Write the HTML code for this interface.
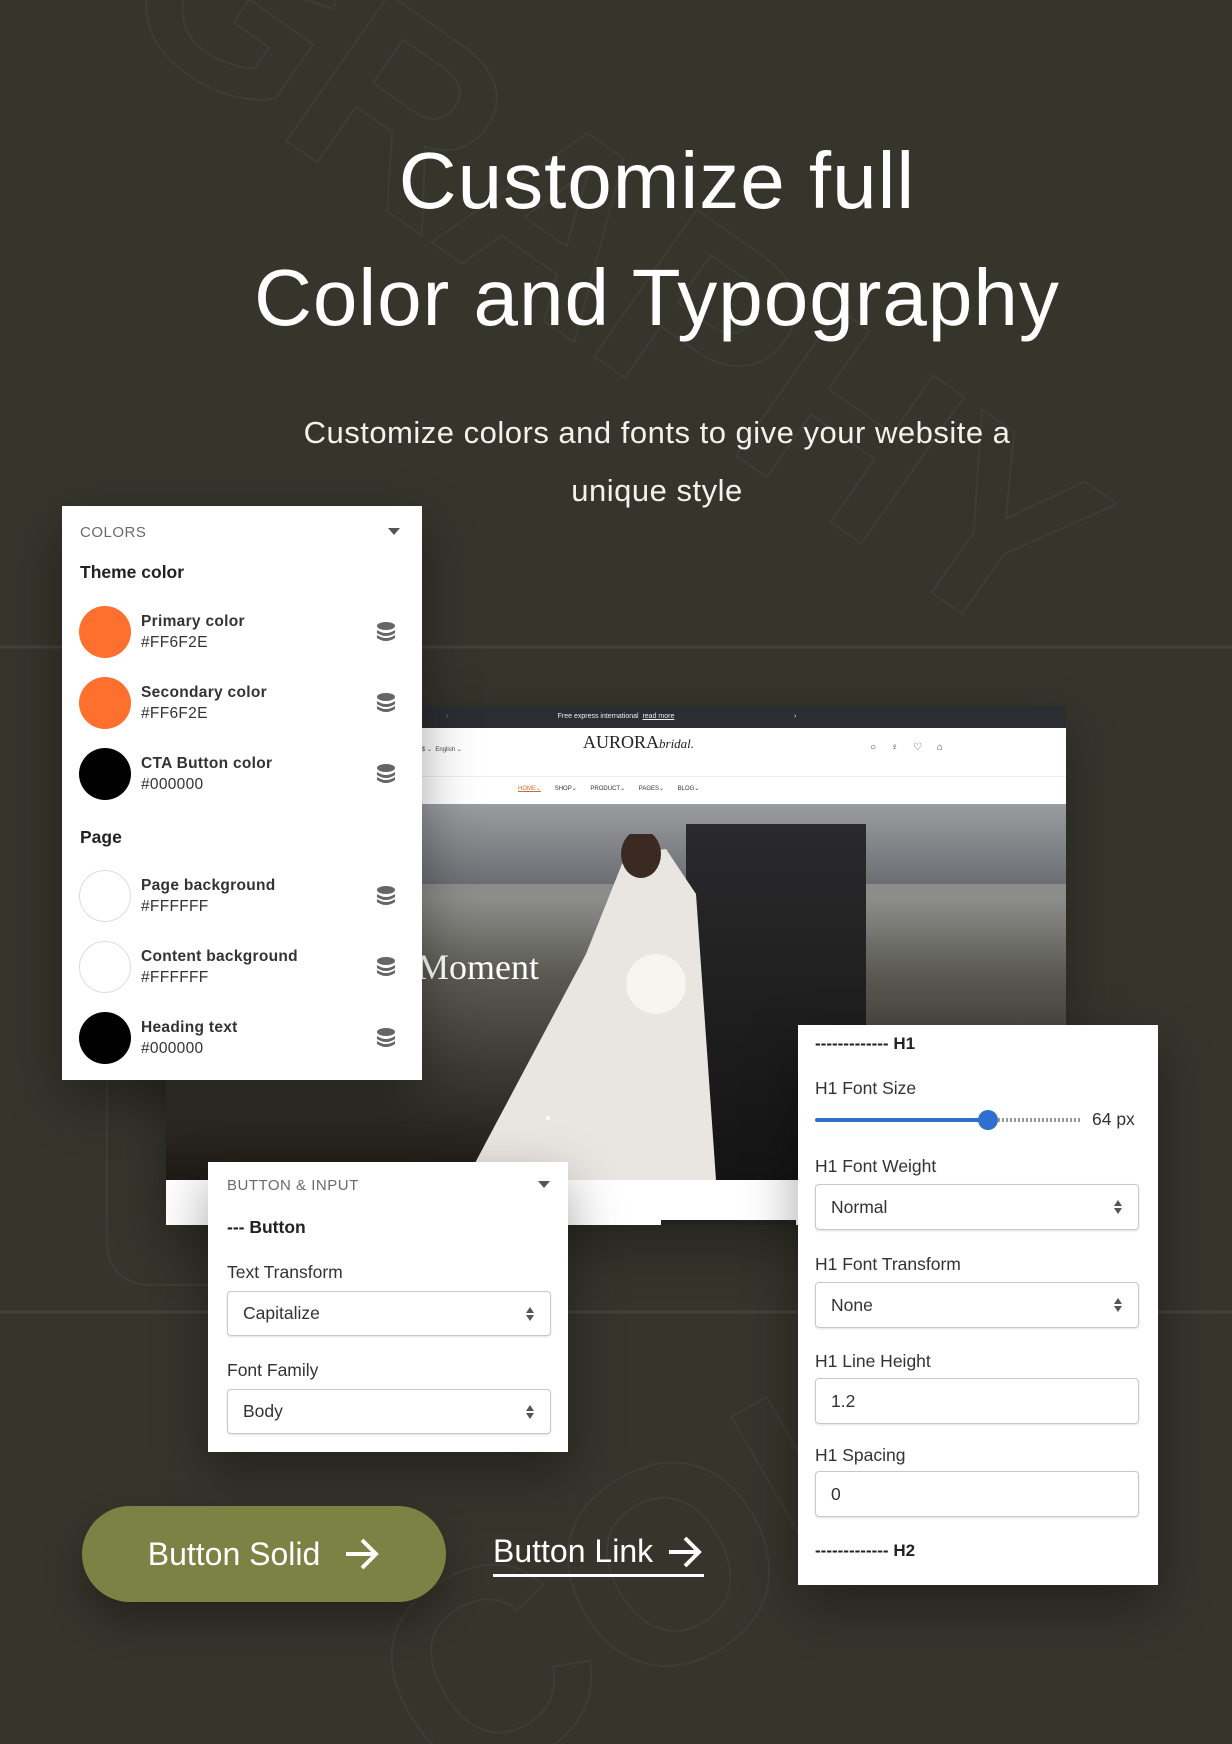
<!DOCTYPE html>
<html><head><meta charset="utf-8">
<style>
*{margin:0;padding:0;box-sizing:border-box}
html,body{width:1232px;height:1744px;overflow:hidden}
body{background:#35352c;position:relative;font-family:"Liberation Sans",sans-serif}
.abs{position:absolute}
.title{left:100px;width:1114px;text-align:center;color:#fff;font-size:80px;letter-spacing:1px}
.sub{left:100px;width:1114px;text-align:center;color:#f2f2ee;font-size:31px;line-height:58px;letter-spacing:.5px}
.panel{background:#fff;box-shadow:0 20px 50px rgba(0,0,0,.35)}
.cap{color:#6b6b6b;font-size:15px;letter-spacing:.5px}
.sec{color:#222;font-size:18px;font-weight:bold}
.row{position:absolute;left:17px;right:17px;height:54px}
.circ{position:absolute;left:0;top:0;width:52px;height:52px;border-radius:50%}
.nm{position:absolute;left:62px;top:7px;font-size:15.5px;font-weight:bold;color:#333;letter-spacing:.3px}
.hx{position:absolute;left:62px;top:28px;font-size:15.5px;color:#333;letter-spacing:.3px}
.db{position:absolute;right:10px;top:16px}
.lbl{font-size:17.5px;color:#333}
.sel{position:absolute;border:1px solid #c9c9c9;border-radius:4px;box-shadow:0 1px 2px rgba(0,0,0,.12);font-size:17.5px;color:#333;padding-left:15px;display:flex;align-items:center;background:#fff}
.sel .ar{position:absolute;right:16px;top:50%;margin-top:-7px;width:8px;height:14px}
</style></head><body>

<svg class="abs" style="left:0;top:0" width="1232" height="1744">
 <g fill="none" stroke="rgba(255,255,255,0.045)" stroke-width="2">
  <text x="-40" y="120" font-family="Liberation Sans" font-size="260" font-weight="bold" transform="rotate(35 200 300)">GRAPHY</text>
  <text x="380" y="1650" font-family="Liberation Sans" font-size="280" font-weight="bold" transform="rotate(-30 700 1600)">COLO</text>
  <rect x="107" y="960" width="360" height="325" rx="40"/>
 </g>
 <line x1="0" y1="647" x2="1232" y2="647" stroke="rgba(255,255,255,0.07)" stroke-width="3"/>
 <line x1="0" y1="1312" x2="1232" y2="1312" stroke="rgba(255,255,255,0.07)" stroke-width="3"/>
</svg>

<div class="abs title" style="top:135px">Customize full</div>
<div class="abs title" style="top:252px">Color and Typography</div>
<div class="abs sub" style="top:404px">Customize colors and fonts to give your website a<br>unique style</div>

<div class="abs" style="left:166px;top:706px;width:900px;height:519px;background:#fff;overflow:hidden;box-shadow:0 20px 50px rgba(0,0,0,.3)">
 <div class="abs" style="left:0;top:0;width:900px;height:22px;background:#2b2d31;color:#eee;font-size:7px;text-align:center;line-height:22px">Free express international &nbsp;<u>read more</u><span style="position:absolute;left:280px;color:#888">‹</span><span style="position:absolute;left:628px">›</span></div>
 <div class="abs" style="left:417px;top:26px;font-family:'Liberation Serif',serif;font-size:18px;color:#222">AURORA<i style="font-size:13px">bridal.</i></div>
 <div class="abs" style="left:256px;top:40px;font-size:6px;color:#444;width:300px;">$ ⌄ &nbsp;English ⌄</div>
 <div class="abs" style="left:704px;top:36px;font-size:10px;color:#444;letter-spacing:6px">○ ♀ ♡ ⌂</div>
 <div class="abs" style="left:0;top:70px;width:900px;height:1px;background:#eee"></div>
 <div class="abs" style="left:352px;top:79px;font-size:6px;color:#333;word-spacing:12px"><span style="color:#c4703a;text-decoration:underline">HOME⌄</span> SHOP⌄ PRODUCT⌄ PAGES⌄ BLOG⌄</div>
 <div class="abs" style="left:0;top:98px;width:900px;height:376px;background:linear-gradient(180deg,#7d7f82 0%,#8d8e8c 25%,#5a5a52 45%,#3c3a33 70%,#1e1a15 100%)">
  <div class="abs" style="left:0;top:0;width:900px;height:80px;background:linear-gradient(180deg,#9a9ca0,#6b6e72)"></div>
  <div class="abs" style="left:520px;top:20px;width:180px;height:356px;background:linear-gradient(180deg,#2a2a2c,#141414)"></div>
  <svg class="abs" style="left:300px;top:30px" width="360" height="346"><polygon points="160,20 200,15 230,60 250,346 0,346 120,120" fill="#e9e6e2"/><circle cx="190" cy="150" r="30" fill="#f7f5f0"/><ellipse cx="175" cy="20" rx="20" ry="24" fill="#3a2a22"/></svg>
  <div class="abs" style="left:230px;top:142px;font-family:'Liberation Serif',serif;font-size:36px;color:#fff">r Moment</div>
  <div class="abs" style="left:380px;top:312px;width:4px;height:4px;border-radius:50%;background:#fff"></div>
 </div>
 <div class="abs" style="left:495px;top:514px;width:135px;height:5px;background:#222"></div>
</div>

<div class="abs panel" style="left:62px;top:506px;width:360px;height:574px">
 <div class="abs cap" style="left:18px;top:18px">COLORS</div>
 <svg class="abs" style="left:326px;top:22px" width="12" height="8"><polygon points="0,0 12,0 6,7" fill="#555"/></svg>
 <div class="abs sec" style="left:18px;top:56px;font-size:17.5px">Theme color</div>
 <div class="row" style="top:100px"><div class="circ" style="background:#ff6f2e"></div><div class="nm">Primary color</div><div class="hx">#FF6F2E</div><svg class="db" width="18" height="20" viewBox="0 0 18 20"><g fill="#666"><ellipse cx="9" cy="4" rx="9" ry="4"/><path d="M0 8q9 6 18 0v3q-9 6-18 0z"/><path d="M0 13q9 6 18 0v3q-9 6-18 0z"/></g></svg></div>
 <div class="row" style="top:171px"><div class="circ" style="background:#ff6f2e"></div><div class="nm">Secondary color</div><div class="hx">#FF6F2E</div><svg class="db" width="18" height="20" viewBox="0 0 18 20"><g fill="#666"><ellipse cx="9" cy="4" rx="9" ry="4"/><path d="M0 8q9 6 18 0v3q-9 6-18 0z"/><path d="M0 13q9 6 18 0v3q-9 6-18 0z"/></g></svg></div>
 <div class="row" style="top:242px"><div class="circ" style="background:#000"></div><div class="nm">CTA Button color</div><div class="hx">#000000</div><svg class="db" width="18" height="20" viewBox="0 0 18 20"><g fill="#666"><ellipse cx="9" cy="4" rx="9" ry="4"/><path d="M0 8q9 6 18 0v3q-9 6-18 0z"/><path d="M0 13q9 6 18 0v3q-9 6-18 0z"/></g></svg></div>
 <div class="abs sec" style="left:18px;top:321px;font-size:17.5px">Page</div>
 <div class="row" style="top:364px"><div class="circ" style="border:1.5px solid #ddd"></div><div class="nm">Page background</div><div class="hx">#FFFFFF</div><svg class="db" width="18" height="20" viewBox="0 0 18 20"><g fill="#666"><ellipse cx="9" cy="4" rx="9" ry="4"/><path d="M0 8q9 6 18 0v3q-9 6-18 0z"/><path d="M0 13q9 6 18 0v3q-9 6-18 0z"/></g></svg></div>
 <div class="row" style="top:435px"><div class="circ" style="border:1.5px solid #ddd"></div><div class="nm">Content background</div><div class="hx">#FFFFFF</div><svg class="db" width="18" height="20" viewBox="0 0 18 20"><g fill="#666"><ellipse cx="9" cy="4" rx="9" ry="4"/><path d="M0 8q9 6 18 0v3q-9 6-18 0z"/><path d="M0 13q9 6 18 0v3q-9 6-18 0z"/></g></svg></div>
 <div class="row" style="top:506px"><div class="circ" style="background:#000"></div><div class="nm">Heading text</div><div class="hx">#000000</div><svg class="db" width="18" height="20" viewBox="0 0 18 20"><g fill="#666"><ellipse cx="9" cy="4" rx="9" ry="4"/><path d="M0 8q9 6 18 0v3q-9 6-18 0z"/><path d="M0 13q9 6 18 0v3q-9 6-18 0z"/></g></svg></div>
</div>

<div class="abs panel" style="left:208px;top:1162px;width:360px;height:290px">
 <div class="abs cap" style="left:19px;top:15px">BUTTON &amp; INPUT</div>
 <svg class="abs" style="left:330px;top:19px" width="12" height="8"><polygon points="0,0 12,0 6,7" fill="#555"/></svg>
 <div class="abs sec" style="left:19px;top:55px;font-size:17.5px">--- Button</div>
 <div class="abs lbl" style="left:19px;top:100px">Text Transform</div>
 <div class="sel" style="left:19px;top:129px;width:324px;height:45px">Capitalize<svg class="ar" viewBox="0 0 8 14"><polygon points="0,6 8,6 4,0" fill="#555"/><polygon points="0,8 8,8 4,14" fill="#555"/></svg></div>
 <div class="abs lbl" style="left:19px;top:198px">Font Family</div>
 <div class="sel" style="left:19px;top:227px;width:324px;height:45px">Body<svg class="ar" viewBox="0 0 8 14"><polygon points="0,6 8,6 4,0" fill="#555"/><polygon points="0,8 8,8 4,14" fill="#555"/></svg></div>
</div>

<div class="abs panel" style="left:798px;top:1025px;width:360px;height:560px">
 <div class="abs sec" style="left:17px;top:9px;font-size:17px">------------- H1</div>
 <div class="abs lbl" style="left:17px;top:53px">H1 Font Size</div>
 <div class="abs" style="left:17px;top:93px;width:175px;height:4px;background:#2f6fd0;border-radius:2px"></div>
 <div class="abs" style="left:180px;top:85px;width:20px;height:20px;border-radius:50%;background:#2f6fd0"></div>
 <div class="abs" style="left:200px;top:93px;width:83px;height:4px;background:repeating-linear-gradient(90deg,#999 0 2px,transparent 2px 4px)"></div>
 <div class="abs lbl" style="left:294px;top:84px">64 px</div>
 <div class="abs lbl" style="left:17px;top:131px">H1 Font Weight</div>
 <div class="sel" style="left:17px;top:159px;width:324px;height:46px">Normal<svg class="ar" viewBox="0 0 8 14"><polygon points="0,6 8,6 4,0" fill="#555"/><polygon points="0,8 8,8 4,14" fill="#555"/></svg></div>
 <div class="abs lbl" style="left:17px;top:229px">H1 Font Transform</div>
 <div class="sel" style="left:17px;top:257px;width:324px;height:46px">None<svg class="ar" viewBox="0 0 8 14"><polygon points="0,6 8,6 4,0" fill="#555"/><polygon points="0,8 8,8 4,14" fill="#555"/></svg></div>
 <div class="abs lbl" style="left:17px;top:326px">H1 Line Height</div>
 <div class="sel" style="left:17px;top:353px;width:324px;height:46px">1.2</div>
 <div class="abs lbl" style="left:17px;top:420px">H1 Spacing</div>
 <div class="sel" style="left:17px;top:446px;width:324px;height:46px">0</div>
 <div class="abs sec" style="left:17px;top:516px;font-size:17px">------------- H2</div>
</div>

<div class="abs" style="left:82px;top:1506px;width:364px;height:96px;border-radius:48px;background:#7a8244;box-shadow:0 20px 40px rgba(0,0,0,.3);color:#fff;font-size:32px;display:flex;align-items:center;justify-content:center;gap:24px">Button Solid
 <svg width="36" height="32" viewBox="0 0 36 32"><path d="M2 16H32M18 2L32 16L18 30" fill="none" stroke="#fff" stroke-width="4"/></svg></div>
<div class="abs" style="left:493px;top:1533px;color:#fff;font-size:32px;display:flex;align-items:center;gap:14px">Button Link
 <svg width="36" height="32" viewBox="0 0 36 32"><path d="M2 16H32M18 2L32 16L18 30" fill="none" stroke="#fff" stroke-width="4"/></svg></div>
<div class="abs" style="left:493px;top:1574px;width:211px;height:3px;background:#fff"></div>
</body></html>
